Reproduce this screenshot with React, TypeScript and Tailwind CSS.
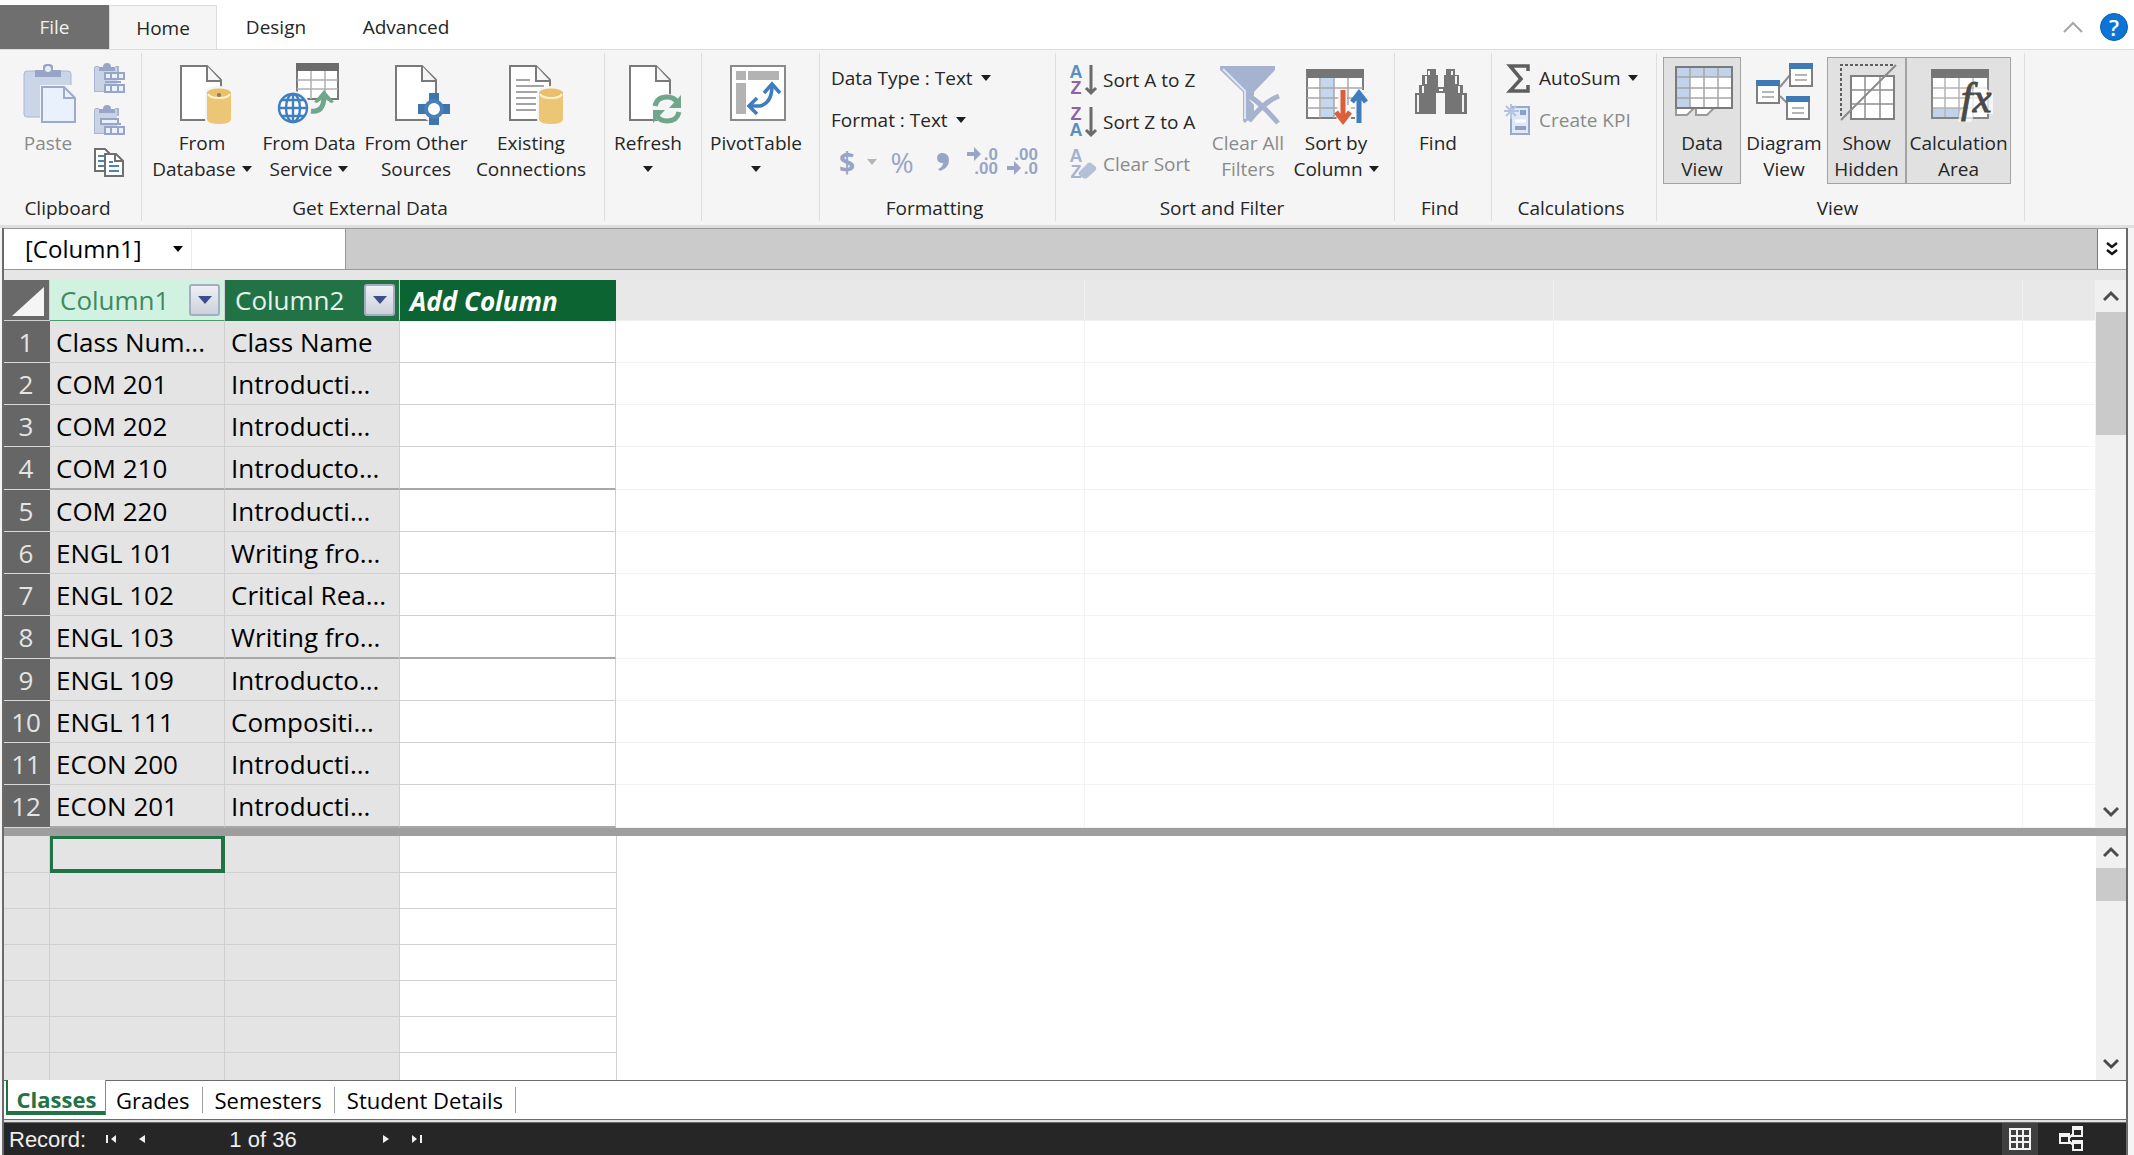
import type { ReactNode } from 'react'
import { clsx } from 'clsx'

const rows = [
  ['Class Num...', 'Class Name'],
  ['COM 201', 'Introducti...'],
  ['COM 202', 'Introducti...'],
  ['COM 210', 'Introducto...'],
  ['COM 220', 'Introducti...'],
  ['ENGL 101', 'Writing fro...'],
  ['ENGL 102', 'Critical Rea...'],
  ['ENGL 103', 'Writing fro...'],
  ['ENGL 109', 'Introducto...'],
  ['ENGL 111', 'Compositi...'],
  ['ECON 200', 'Introducti...'],
  ['ECON 201', 'Introducti...'],
]

const calcRows = [0, 1, 2, 3, 4, 5, 6]

const sheets = ['Grades', 'Semesters', 'Student Details']

function Caret({ className = 'text-[#1e1e1e]' }: { className?: string }) {
  return (
    <svg viewBox="0 0 10 6" className={clsx('inline-block h-[6px] w-[10px] shrink-0', className)} fill="currentColor">
      <path d="M0 0h10L5 6z" />
    </svg>
  )
}

function Icon({ children }: { children: ReactNode }) {
  return (
    <svg viewBox="0 0 64 64" className="mb-1 h-16 w-16 shrink-0 overflow-visible" fill="none">
      {children}
    </svg>
  )
}

/* ---------- large ribbon icons ---------- */

function Page({ x = 10 }: { x?: number }) {
  return (
    <g stroke="#7a7a7a" strokeWidth="2">
      <path d={`M${x + 1} 4h26l14 14v40h-40z`} fill="#fff" />
      <path d={`M${x + 27} 4v15h14`} fill="#f5f5f5" />
    </g>
  )
}

function Cylinder({ x = 37 }: { x?: number }) {
  return (
    <g>
      <path d={`M${x - 2} 31q0-7 14-7t14 7v26q0 7-14 7t-14-7z`} fill="#f5f5f5" />
      <path d={`M${x} 31v26q0 5 12 5t12-5V31z`} fill="#ecc675" />
      <ellipse cx={x + 12} cy="31" rx="12" ry="4.5" fill="#e9bf6a" />
      <path d={`M${x + 1} 32q2 4 11 4t11-4`} stroke="#fff3d6" strokeWidth="2" />
    </g>
  )
}

function PasteIcon() {
  return (
    <Icon>
      <rect x="8" y="9" width="47" height="46" rx="3" fill="#cbd5e8" stroke="#a9b6d3" />
      <path d="M19 15V8h8V5q0-3 4-3h2q4 0 4 3v3h8v7z" fill="#98a5c6" />
      <circle cx="32" cy="7" r="3" fill="#e8edf6" />
      <path d="M24 23h35v41H24z" fill="#f5f5f5" />
      <path d="M26 25h22l11 11v24H26z" fill="#e9f1fc" stroke="#9dabc9" strokeWidth="2" />
      <path d="M48 25v11h11" stroke="#9dabc9" strokeWidth="2" />
    </Icon>
  )
}

function DatabaseIcon() {
  return (
    <Icon>
      <Page />
      <Cylinder />
      <circle cx="49" cy="33" r="2" fill="#8a7a55" />
    </Icon>
  )
}

function ServiceIcon() {
  return (
    <Icon>
      <path d="M20 2h41v35H20z" fill="#fff" stroke="#7a7a7a" strokeWidth="2" />
      <path d="M19 1h43v8H19z" fill="#6b6b6b" />
      <path d="M34 9v28M48 9v28M20 18h41M20 27h41" stroke="#b0b0b0" strokeWidth="1.5" />
      <circle cx="16" cy="46" r="17" fill="#f5f5f5" />
      <g stroke="#3f7fbf" strokeWidth="2.4">
        <circle cx="16" cy="46" r="14" fill="#fff" />
        <ellipse cx="16" cy="46" rx="7" ry="14" />
        <path d="M16 32v28M2 46h28M5 38h22M5 54h22" />
      </g>
      <path d="M34 51q14 2 14-17" stroke="#f5f5f5" strokeWidth="10" />
      <path d="M34 49q13 2 13-15" stroke="#6fa68c" strokeWidth="5" />
      <path d="M37 40l10-12 10 12-3 1-7-5-7 5z" fill="#6fa68c" />
    </Icon>
  )
}

function OtherIcon() {
  return (
    <Icon>
      <Page x={11} />
      <circle cx="50" cy="47" r="13" fill="#f5f5f5" />
      <path d="M45 31h10v9H45zM45 63h10v-9H45zM34 42v10h9V42zM66 42v10h-9V42z" fill="#3f74ad" />
      <circle cx="50" cy="47" r="8" fill="#fff" stroke="#4a80b8" strokeWidth="4" />
    </Icon>
  )
}

function ExistingIcon() {
  return (
    <Icon>
      <Page x={10} />
      <path d="M17 18h14M17 24h28M17 30h22M17 36h20M17 42h20M17 48h20" stroke="#a5a5a5" strokeWidth="2" />
      <Cylinder x={40} />
    </Icon>
  )
}

function RefreshIcon() {
  return (
    <Icon>
      <Page x={13} />
      <circle cx="51" cy="47" r="15" fill="#f5f5f5" />
      <path d="M39 44q2-9 12-9 7 0 10 5M63 50q-2 9-12 9-7 0-10-5" stroke="#6fa68c" strokeWidth="5" />
      <path d="M65 33v13H53zM37 61V48h12z" fill="#6fa68c" />
    </Icon>
  )
}

function PivotIcon() {
  return (
    <Icon>
      <path d="M7 4h54v54H7z" fill="#fff" stroke="#8a8a8a" strokeWidth="2" />
      <path d="M12 9h10v9H12zM24 9h31v9H24zM12 21h10v31H12z" fill="#b3b3b3" />
      <path d="M27 44h9q12-3 12-20" stroke="#3f7dbf" strokeWidth="3.5" />
      <path d="M40 31l8-9 8 9M33 36l-8 8 8 8" stroke="#3f7dbf" strokeWidth="3.5" />
    </Icon>
  )
}

function ClearFiltersIcon() {
  return (
    <Icon>
      <path d="M4 4h55v4L38 30v22l-9 9-2-2V30L4 8z" fill="#a5b2d0" />
      <path d="M7 7l22 22v28" stroke="#dfe5f0" strokeWidth="2" />
      <path d="M36 35l25 26M62 34L40 50" stroke="#f5f5f5" strokeWidth="8" />
      <path d="M33 34q12 7 29 27M63 34Q48 40 33 59" stroke="#a5b2d0" strokeWidth="5" />
    </Icon>
  )
}

function SortByIcon() {
  return (
    <Icon>
      <path d="M3 8h56v48H3z" fill="#fff" stroke="#7d7d7d" strokeWidth="2" />
      <path d="M17 16h13v39H17z" fill="#c3d8ee" />
      <path d="M3 7h57v9H3z" fill="#757575" />
      <path d="M16 16v40M30 16v40M44 16v40M3 26h56M3 36h56M3 46h56" stroke="#a8a8a8" strokeWidth="1.5" />
      <path d="M35 27h8v16h4v19H32zM51 28h13v34H51z" fill="#f5f5f5" />
      <path d="M39 28v30M32 50l7 9 7-9" stroke="#d9603b" strokeWidth="5" />
      <path d="M55 61V32M48 40l7-9 7 9" stroke="#3f7dbf" strokeWidth="5" />
    </Icon>
  )
}

function FindIcon() {
  return (
    <Icon>
      <path d="M21 7h9v6h2v12h6V13h2V7h9v6h4v10h4v8h4v21H39V31h-9v21H9V31h4v-8h3V13h5z" fill="#757575" />
      <path d="M12 33v17M17 24v7M20 14v8M23 9v4M57 33v17M53 24v7M50 14v8M46 9v4" stroke="#f2f2f2" strokeWidth="2" />
      <path d="M33 28h4" stroke="#fff" strokeWidth="2" />
    </Icon>
  )
}

function DataViewIcon() {
  return (
    <Icon>
      <path d="M6 46v7h11l7-7M26 46v7h11l7-7" fill="#fff" stroke="#9a9a9a" strokeWidth="2" />
      <path d="M6 5h56v41H6z" fill="#fff" />
      <path d="M6 5h56v10H20v31H6z" fill="#c0d3ea" />
      <path d="M20 5v41M34 5v41M48 5v41M6 15h56M6 26h56M6 36h56" stroke="#a6a6a6" strokeWidth="1.5" />
      <path d="M6 5h56v41H6z" stroke="#7a7a7a" strokeWidth="2" />
    </Icon>
  )
}

function DiagramBox({ x, y }: { x: number; y: number }) {
  return (
    <g>
      <rect x={x + 1} y={y + 1} width="22" height="22" fill="#fff" stroke="#808080" strokeWidth="2" />
      <rect x={x} y={y} width="24" height="6" fill="#3f7ab5" />
      <path d={`M${x + 6} ${y + 12}h12M${x + 6} ${y + 17}h12`} stroke="#b5b5b5" strokeWidth="2" />
    </g>
  )
}

function DiagramIcon() {
  return (
    <Icon>
      <path d="M28 25l10-12M28 34l8 8" stroke="#909090" strokeWidth="2" />
      <DiagramBox x={37} y={1} />
      <DiagramBox x={4} y={18} />
      <DiagramBox x={34} y={34} />
    </Icon>
  )
}

function HiddenIcon() {
  return (
    <Icon>
      <path d="M16 14h43v43H16z" fill="#fff" />
      <path d="M30 14v43M45 14v43M16 28h43M16 42h43" stroke="#8f8f8f" strokeWidth="1.5" />
      <path d="M16 14h43v43H16z" stroke="#808080" strokeWidth="2" />
      <path d="M6 54V3h52" stroke="#5f5f5f" strokeWidth="2" strokeDasharray="3 2" />
      <path d="M6 58L61 3" stroke="#8a8a8a" strokeWidth="2" />
    </Icon>
  )
}

function CalculationIcon() {
  return (
    <Icon>
      <path d="M5 8h56v48H5z" fill="#fff" />
      <path d="M5 46h30v10H5z" fill="#c0d3ea" />
      <path d="M18 16v40M32 16v40M46 16v40M5 26h56M5 36h56M5 46h56" stroke="#b5b5b5" strokeWidth="1.5" />
      <path d="M5 8h56v48H5z" stroke="#858585" strokeWidth="2" />
      <path d="M4 7h58v9H4z" fill="#757575" />
      <path d="M50 17h10v10l6 5v20H48l-4 8H31l2-12h6z" fill="#fff" fillOpacity="0.7" />
      <text x="34" y="50" fontFamily="Liberation Serif, serif" fontStyle="italic" fontSize="42" fill="#4a4a4a" stroke="#4a4a4a">
        fx
      </text>
    </Icon>
  )
}

/* ---------- small ribbon icons ---------- */

function SmallPasteIcon({ append = false }: { append?: boolean }) {
  return (
    <svg viewBox="0 0 32 30" className="h-[30px] w-8" fill="none">
      <path d="M2 4h4M22 4h3v7M2 4v24h9" stroke="#a9b5d1" strokeWidth="2" />
      <path d="M2 4h22v24H2z" fill="#c9d3e6" />
      <path d="M6 8V4h4q0-4 4-4t4 4h4v4z" fill="#98a5c6" />
      {append ? (
        <path d="M8 14h17v5H8z" fill="#e9f1fc" stroke="#98a5c6" strokeWidth="2" />
      ) : (
        <path d="M12 10h19v6H12z" fill="#e9f1fc" stroke="#98a5c6" strokeWidth="2" />
      )}
      <path d="M12 22h19v7H12z" fill="#e9f1fc" stroke="#98a5c6" strokeWidth="2" />
      <path d="M18 22v7M25 22v7M12 19h16" stroke="#98a5c6" strokeWidth="2" />
      {!append && <path d="M18 10v6M25 10v6" stroke="#98a5c6" strokeWidth="2" />}
    </svg>
  )
}

function CopyIcon() {
  return (
    <svg viewBox="0 0 32 30" className="h-[30px] w-8" fill="none">
      <path d="M2 2h10l5 5v17H2z" fill="#fff" stroke="#6f6f6f" strokeWidth="2" />
      <path d="M5 9h6M5 14h6M5 19h6" stroke="#4f83b5" strokeWidth="2" />
      <path d="M12 7h11l7 7v15H12z" fill="#fff" stroke="#6f6f6f" strokeWidth="2" />
      <path d="M22 7v7h7" stroke="#6f6f6f" strokeWidth="2" />
      <path d="M16 15h4M16 19h10M16 24h10" stroke="#4f83b5" strokeWidth="2" />
    </svg>
  )
}

function SortIcon({ top, bottom, topColor, bottomColor, clear = false }: { top: string; bottom: string; topColor: string; bottomColor: string; clear?: boolean }) {
  return (
    <svg viewBox="0 0 28 32" className="h-8 w-7 shrink-0 overflow-visible" fill="none">
      <g fontFamily="Liberation Sans, sans-serif" fontWeight="700" fontSize="18" textAnchor="middle">
        <text x="7" y="14" fill={topColor}>{top}</text>
        <text x="7" y="30" fill={bottomColor}>{bottom}</text>
      </g>
      {clear ? (
        <path d="M22 15l5 4q1 2-1 4l-8 7q-2 1-4 0l-4-3q-1-2 0-3l9-9q2-1 3 0z" fill="#b4bfd8" />
      ) : (
        <path d="M22 1v28M17 24l5 5 5-5" stroke="#6b6b6b" strokeWidth="3" />
      )}
    </svg>
  )
}

function DecimalIcon({ increase = false }: { increase?: boolean }) {
  return (
    <svg viewBox="0 0 32 30" className="h-[30px] w-8 overflow-visible" fill="#98a5c6">
      <path d={increase ? 'M0 5h7V0l7 7-7 7V9H0z' : 'M0 19h7v-5l7 7-7 7v-5H0z'} />
      <g fontFamily="Liberation Sans, sans-serif" fontWeight="700" fontSize="17" textAnchor="end">
        <text x="31" y="13">{increase ? '.0' : '.00'}</text>
        <text x="31" y="27">{increase ? '.00' : '.0'}</text>
      </g>
    </svg>
  )
}

function KpiIcon() {
  return (
    <svg viewBox="0 0 28 32" className="h-8 w-7 shrink-0" fill="none">
      <path d="M7 3h18v27H7z" fill="#dfe8f6" stroke="#98a9cc" strokeWidth="2" />
      <path d="M16 6h6v5h-6zM11 22h11v4H11z" fill="#8fa0c8" />
      <path d="M11 17h11" stroke="#fff" strokeWidth="3" />
      <path d="M7 0v15M0 7h15M2 2l10 10M12 2L2 12" stroke="#b4c4e0" strokeWidth="2" />
    </svg>
  )
}

/* ---------- ribbon building blocks ---------- */

function Group({ label, className, children }: { label?: string; className: string; children: ReactNode }) {
  return (
    <section className={clsx('flex h-[168px] shrink-0 flex-col justify-between border-r border-[#dedede] pt-1', className)}>
      <div className="flex h-[127px]">{children}</div>
      {label && <div className="pr-[6px] text-center leading-[26px]">{label}</div>}
    </section>
  )
}

interface BigButtonProps {
  icon: ReactNode
  lines: string[]
  className: string
  caret?: boolean
  pressed?: boolean
  disabled?: boolean
}

function BigButton({ icon, lines, className, caret, pressed, disabled }: BigButtonProps) {
  return (
    <button
      type="button"
      disabled={disabled}
      aria-pressed={pressed}
      className={clsx(
        'flex h-[127px] shrink-0 flex-col items-center border pt-1 leading-[26px] whitespace-nowrap',
        pressed ? 'border-[#a3a3a3] bg-[#e1e1e1]' : 'border-transparent',
        disabled && 'text-[#8a8a8a]',
        className,
      )}
    >
      {icon}
      <span>{lines[0]}</span>
      <span className="flex h-[26px] items-center gap-1.5">
        {lines[1]}
        {caret && <Caret />}
      </span>
    </button>
  )
}

function Ribbon() {
  return (
    <div className="flex border-t border-[#dcdcdc] bg-[#f5f5f5] pt-[3px] pb-1 text-[19px]">
      <Group label="Clipboard" className="w-[142px]">
        <BigButton className="ml-[10px] w-[76px]" icon={<PasteIcon />} lines={['Paste']} disabled />
        <div className="ml-[7px] flex flex-col gap-3 pt-[6px]">
          <button type="button" aria-label="Paste Append" disabled><SmallPasteIcon /></button>
          <button type="button" aria-label="Paste Replace" disabled><SmallPasteIcon append /></button>
          <button type="button" aria-label="Copy"><CopyIcon /></button>
        </div>
      </Group>

      <Group label="Get External Data" className="w-[463px]">
        <BigButton className="ml-1 w-[112px]" icon={<DatabaseIcon />} lines={['From', 'Database']} caret />
        <BigButton className="w-[102px]" icon={<ServiceIcon />} lines={['From Data', 'Service']} caret />
        <BigButton className="w-[112px]" icon={<OtherIcon />} lines={['From Other', 'Sources']} />
        <BigButton className="w-[118px]" icon={<ExistingIcon />} lines={['Existing', 'Connections']} />
      </Group>

      <Group className="w-[97px]">
        <BigButton className="ml-[2px] w-[82px]" icon={<RefreshIcon />} lines={['Refresh']} caret />
      </Group>

      <Group className="w-[118px]">
        <BigButton className="ml-[2px] w-[104px]" icon={<PivotIcon />} lines={['PivotTable']} caret />
      </Group>

      <Group label="Formatting" className="w-[236px]">
        <div className="flex flex-col pl-[11px]">
          <button type="button" className="flex h-[42px] shrink-0 items-center gap-2">Data Type : Text <Caret /></button>
          <button type="button" className="flex h-[42px] shrink-0 items-center gap-2">Format : Text <Caret /></button>
          <div className="flex h-[42px] shrink-0 items-center text-[28px] text-[#98a5c6]">
            <button type="button" aria-label="Currency" disabled className="flex w-[54px] items-center gap-3 pl-2 font-bold">
              $ <Caret className="text-[#b5b5b5]" />
            </button>
            <button type="button" aria-label="Percent" disabled className="w-[34px] text-center font-medium">%</button>
            <button type="button" aria-label="Thousands separator" disabled className="w-12">
              <svg viewBox="0 0 12 18" className="mx-auto h-[18px] w-3" fill="#98a5c6">
                <path d="M0 5a5 5 0 0 1 6-5q6 1 6 7 0 8-9 11l-2-2q5-2 5-6Q0 10 0 5z" />
              </svg>
            </button>
            <button type="button" aria-label="Increase decimal" disabled><DecimalIcon increase /></button>
            <button type="button" aria-label="Decrease decimal" disabled className="ml-2"><DecimalIcon /></button>
          </div>
        </div>
      </Group>

      <Group label="Sort and Filter" className="w-[339px]">
        <div className="flex w-[151px] flex-col pt-[2px] pl-[13px] whitespace-nowrap">
          <button type="button" className="flex h-[42px] shrink-0 items-center gap-1.5">
            <SortIcon top="A" bottom="Z" topColor="#5a8fc0" bottomColor="#8f62a8" /> Sort A to Z
          </button>
          <button type="button" className="flex h-[42px] shrink-0 items-center gap-1.5">
            <SortIcon top="Z" bottom="A" topColor="#8f62a8" bottomColor="#5a8fc0" /> Sort Z to A
          </button>
          <button type="button" disabled className="flex h-[42px] shrink-0 items-center gap-1.5 text-[#8a8a8a]">
            <SortIcon top="A" bottom="Z" topColor="#a5b2d0" bottomColor="#a5b2d0" clear /> Clear Sort
          </button>
        </div>
        <BigButton className="w-[82px]" icon={<ClearFiltersIcon />} lines={['Clear All', 'Filters']} disabled />
        <BigButton className="w-[94px]" icon={<SortByIcon />} lines={['Sort by', 'Column']} caret />
      </Group>

      <Group label="Find" className="w-[97px]">
        <BigButton className="ml-[2px] w-[82px]" icon={<FindIcon />} lines={['Find']} />
      </Group>

      <Group label="Calculations" className="w-[165px]">
        <div className="flex flex-col pl-[12px] whitespace-nowrap">
          <button type="button" className="flex h-[42px] shrink-0 items-center gap-[7px]">
            <svg viewBox="0 0 28 32" className="h-8 w-7 shrink-0" fill="none">
              <path d="M24 9V4H6l11 13L6 29h18v-6" stroke="#5e5e5e" strokeWidth="3.5" />
            </svg>
            AutoSum <Caret />
          </button>
          <button type="button" disabled className="flex h-[42px] shrink-0 items-center gap-[7px] text-[#8a8a8a]">
            <KpiIcon /> Create KPI
          </button>
        </div>
      </Group>

      <Group label="View" className="w-[368px]">
        <BigButton className="ml-[6px] w-[78px]" icon={<DataViewIcon />} lines={['Data', 'View']} pressed />
        <BigButton className="w-[86px]" icon={<DiagramIcon />} lines={['Diagram', 'View']} />
        <BigButton className="w-[79px]" icon={<HiddenIcon />} lines={['Show', 'Hidden']} pressed />
        <BigButton className="w-[105px]" icon={<CalculationIcon />} lines={['Calculation', 'Area']} pressed />
      </Group>
    </div>
  )
}

function MenuTabs() {
  return (
    <nav className="flex bg-white pt-[5px] text-[19px]">
      <button type="button" className="h-11 w-[109px] bg-[#6f6f6f] text-[#f0f0f0]">File</button>
      <button type="button" className="-mb-px h-[45px] w-[108px] border border-b-0 border-[#dcdcdc] bg-[#f5f5f5]">Home</button>
      <button type="button" className="h-11 w-[118px]">Design</button>
      <button type="button" className="h-11 w-[142px]">Advanced</button>
      <div className="ml-auto flex items-center gap-4 pr-[6px]">
        <button type="button" aria-label="Collapse ribbon">
          <svg viewBox="0 0 22 12" className="h-3 w-[22px]" fill="none" stroke="#a6a6a6" strokeWidth="2">
            <path d="M2 11l9-9 9 9" />
          </svg>
        </button>
        <button type="button" aria-label="Help" className="size-7 rounded-full border border-[#0a5fae] bg-[#0b74d6] text-[22px] leading-6 font-semibold text-white">
          ?
        </button>
      </div>
    </nav>
  )
}

function FormulaBar() {
  return (
    <div className="flex h-[42px] border-y border-[#999] bg-[#cbcbcb]">
      <label className="relative flex w-[188px] items-center border-r border-[#ececec] bg-white">
        <select aria-label="Column" className="w-full appearance-none pl-[21px] text-2xl leading-9 outline-none">
          <option>[Column1]</option>
        </select>
        <Caret className="pointer-events-none absolute right-2 text-black" />
      </label>
      <input aria-label="Formula" className="w-[154px] border-r border-[#999] bg-white px-2 outline-none" />
      <button type="button" aria-label="Expand formula bar" className="ml-auto flex w-[29px] items-center justify-center border-l border-[#777] bg-white">
        <svg viewBox="0 0 12 14" className="h-[14px] w-3" fill="none" stroke="#111" strokeWidth="2.4">
          <path d="M1 1l5 4 5-4M1 8l5 4 5-4" />
        </svg>
      </button>
    </div>
  )
}

function Chevron({ up = false }: { up?: boolean }) {
  return (
    <svg viewBox="0 0 16 12" className="h-3 w-4" fill="none" stroke="#4d4d4d" strokeWidth="3">
      <path d={up ? 'M1 10l7-7 7 7' : 'M1 2l7 7 7-7'} />
    </svg>
  )
}

function ScrollBar({ thumb }: { thumb: string }) {
  return (
    <div className="flex w-[30px] shrink-0 flex-col bg-[#f0f0f0]">
      <button type="button" aria-label="Scroll up" className="flex h-8 items-center justify-center"><Chevron up /></button>
      <div className={clsx('bg-[#cacaca]', thumb)} />
      <button type="button" aria-label="Scroll down" className="mt-auto flex h-8 items-center justify-center"><Chevron /></button>
    </div>
  )
}

function FilterButton({ name }: { name: string }) {
  return (
    <button
      type="button"
      aria-label={`Filter ${name}`}
      className="flex h-8 w-[31px] items-center justify-center rounded-[3px] border-2 border-[#a5adc0] bg-linear-to-b from-[#eef0f4] to-[#ccd1db]"
    >
      <svg viewBox="0 0 14 8" className="h-2 w-[14px]" fill="#3c4f8c">
        <path d="M0 0h14L7 8z" />
      </svg>
    </button>
  )
}

function DataGrid() {
  return (
    <table className="w-full table-fixed border-separate border-spacing-0 bg-white text-left text-[26px] leading-[30px]">
      <colgroup>
        <col className="w-[46px]" />
        <col className="w-[175px]" />
        <col className="w-[175px]" />
        <col className="w-[216px]" />
        <col className="w-[469px]" />
        <col className="w-[469px]" />
        <col className="w-[469px]" />
        <col />
      </colgroup>
      <thead>
        <tr className="h-[41px]">
          <th className="border-r border-b border-[#d0d0d0] bg-[#696969] p-0">
            <svg viewBox="0 0 44 38" className="block h-[38px] w-11"><path d="M8 35L40 6v29z" fill="#f5f5f5" /></svg>
          </th>
          <th className="border-r border-b border-r-[#d0d0d0] border-b-[#4c9a70] bg-[#d1f2e0] p-0 font-normal text-[#3f8a60]">
            <div className="flex items-center justify-between pr-1 pl-[10px]">Column1 <FilterButton name="Column1" /></div>
          </th>
          <th className="border-r border-b border-r-[#d0d0d0] border-b-[#217346] bg-[#217346] p-0 font-normal text-[#e6f2ea]">
            <div className="flex items-center justify-between pr-1 pl-[10px]">Column2 <FilterButton name="Column2" /></div>
          </th>
          <th className="bg-[#0b6431] p-0 pl-[10px] font-bold text-white italic">Add Column</th>
          {[0, 1, 2, 3].map((n) => (
            <th key={n} className="border-r border-b border-[#f2f2f2] bg-[#e8e8e8] p-0" />
          ))}
        </tr>
      </thead>
      <tbody>
        {rows.map((row, i) => {
          // a heavier rule closes every fourth record
          const block = i % 4 === 3
          const line = block ? 'h-[43px] border-b-2 border-b-[#a8a8a8]' : 'h-[42px] border-b border-b-[#cfcfcf]'
          return (
            <tr key={i}>
              <th className="border-b border-[#d9d9d9] bg-[#666] p-0 pr-[2px] text-center font-normal text-[#e4e4e4]">{i + 1}</th>
              <td className={clsx('border-r border-r-[#d0d0d0] bg-[#e4e4e4] p-0 pl-[6px] whitespace-nowrap', line)}>{row[0]}</td>
              <td className={clsx('border-r border-r-[#d0d0d0] bg-[#e4e4e4] p-0 pl-[6px] whitespace-nowrap', line)}>{row[1]}</td>
              <td className={clsx('border-r border-r-[#d0d0d0] p-0', line)} />
              {[0, 1, 2, 3].map((n) => (
                <td key={n} className="border-r border-b border-[#f3f3f3] p-0" />
              ))}
            </tr>
          )
        })}
      </tbody>
    </table>
  )
}

function CalculationGrid() {
  return (
    <table className="w-[613px] table-fixed border-separate border-spacing-0">
      <colgroup>
        <col className="w-[46px]" />
        <col className="w-[175px]" />
        <col className="w-[175px]" />
        <col className="w-[217px]" />
      </colgroup>
      <tbody>
        {calcRows.map((n) => {
          const last = n === calcRows.length - 1
          const line = last ? 'h-[27px]' : n === 0 ? 'h-[37px] border-b' : 'h-[36px] border-b'
          return (
            <tr key={n}>
              <td className={clsx('border-r border-[#d0d0d0] bg-[#e4e4e4] p-0', line)} />
              <td
                className={clsx(
                  'border-r bg-[#e4e4e4] p-0',
                  line,
                  n === 0 ? 'border-[#217346] shadow-[inset_0_0_0_3px_#217346]' : 'border-[#d0d0d0]',
                )}
              />
              <td className={clsx('border-r border-[#d0d0d0] bg-[#e4e4e4] p-0', line)} />
              <td className={clsx('border-r border-[#d0d0d0] p-0', line)} />
            </tr>
          )
        })}
      </tbody>
    </table>
  )
}

function SheetTabs() {
  return (
    <nav className="flex h-[39px] border-t border-[#6a6a6a] bg-white text-[22px] leading-[38px]">
      <button type="button" className="-mt-px ml-[2px] h-[35px] w-[100px] border-r border-b-4 border-l-2 border-[#217346] border-r-[#8c8c8c] bg-white leading-[38px] font-bold text-[#217346]">
        Classes
      </button>
      <div className="flex items-center pb-px">
        {sheets.map((sheet) => (
          <button key={sheet} type="button" className="h-[26px] border-r border-[#a0a0a0] px-3 leading-[26px] first:pl-[10px]">
            {sheet}
          </button>
        ))}
      </div>
    </nav>
  )
}

function NavArrow({ label, d, className }: { label: string; d: string; className: string }) {
  return (
    <button type="button" aria-label={label} className={className}>
      <svg viewBox="0 0 12 10" className="h-[10px] w-3" fill="#f0f0f0"><path d={d} /></svg>
    </button>
  )
}

function StatusBar() {
  return (
    <footer className="flex h-8 items-center bg-[#262626] pl-[5px] font-['Liberation_Sans',Arial,sans-serif] text-[22px] text-[#eee]">
      <span className="w-[96px]">Record:</span>
      <NavArrow label="First record" className="w-[32px]" d="M1 1h2v8H1zM11 1v8L6 5z" />
      <NavArrow label="Previous record" className="w-[78px]" d="M8 1v8L2 5z" />
      <span className="w-[96px] text-center">1 of 36</span>
      <NavArrow label="Next record" className="ml-[70px] w-[30px]" d="M2 1v8l6-4z" />
      <NavArrow label="Last record" className="w-5" d="M1 1v8l5-4zM9 1h2v8H9z" />
      <button type="button" aria-label="Data view" aria-pressed="true" className="ml-auto flex h-8 w-9 items-center justify-center bg-[#404040]">
        <svg viewBox="0 0 22 22" className="size-[22px]" fill="none" stroke="#f2f2f2" strokeWidth="2">
          <path d="M1 1h20v20H1zM8 1v20M14 1v20M1 8h20M1 14h20" />
        </svg>
      </button>
      <button type="button" aria-label="Diagram view" className="mr-[42px] ml-[20px]">
        <svg viewBox="0 0 26 26" className="size-[26px]" fill="none" stroke="#f2f2f2" strokeWidth="2">
          <path d="M2 9h9v8H2zM15 2h9v8h-9zM15 16h9v8h-9zM11 12l4-4M11 15l4 4" />
          <path d="M1 9h11M14 2h11M14 16h11" strokeWidth="4" />
        </svg>
      </button>
    </footer>
  )
}

export default function App() {
  return (
    <div className="flex min-h-screen flex-col bg-[#f5f5f5] font-['Open_Sans','Noto_Sans',sans-serif] text-[#262626]">
      <MenuTabs />
      <Ribbon />
      <div className="h-[3px] bg-[#dedede]" />
      <main className="mr-[6px] ml-[2px] flex flex-1 flex-col border-x-2 border-[#6a6a6a] bg-white text-black">
        <FormulaBar />
        <div className="h-[10px] bg-[#e6e6e6]" />
        <div className="flex">
          <div className="min-w-0 flex-1"><DataGrid /></div>
          <ScrollBar thumb="h-[123px]" />
        </div>
        <div className="h-2 bg-[#9e9e9e]" />
        <div className="flex">
          <div className="min-w-0 flex-1"><CalculationGrid /></div>
          <ScrollBar thumb="h-[33px]" />
        </div>
        <SheetTabs />
        <div className="h-1 border-y border-[#6a6a6a] bg-[#e0e0e0]" />
        <StatusBar />
      </main>
    </div>
  )
}
